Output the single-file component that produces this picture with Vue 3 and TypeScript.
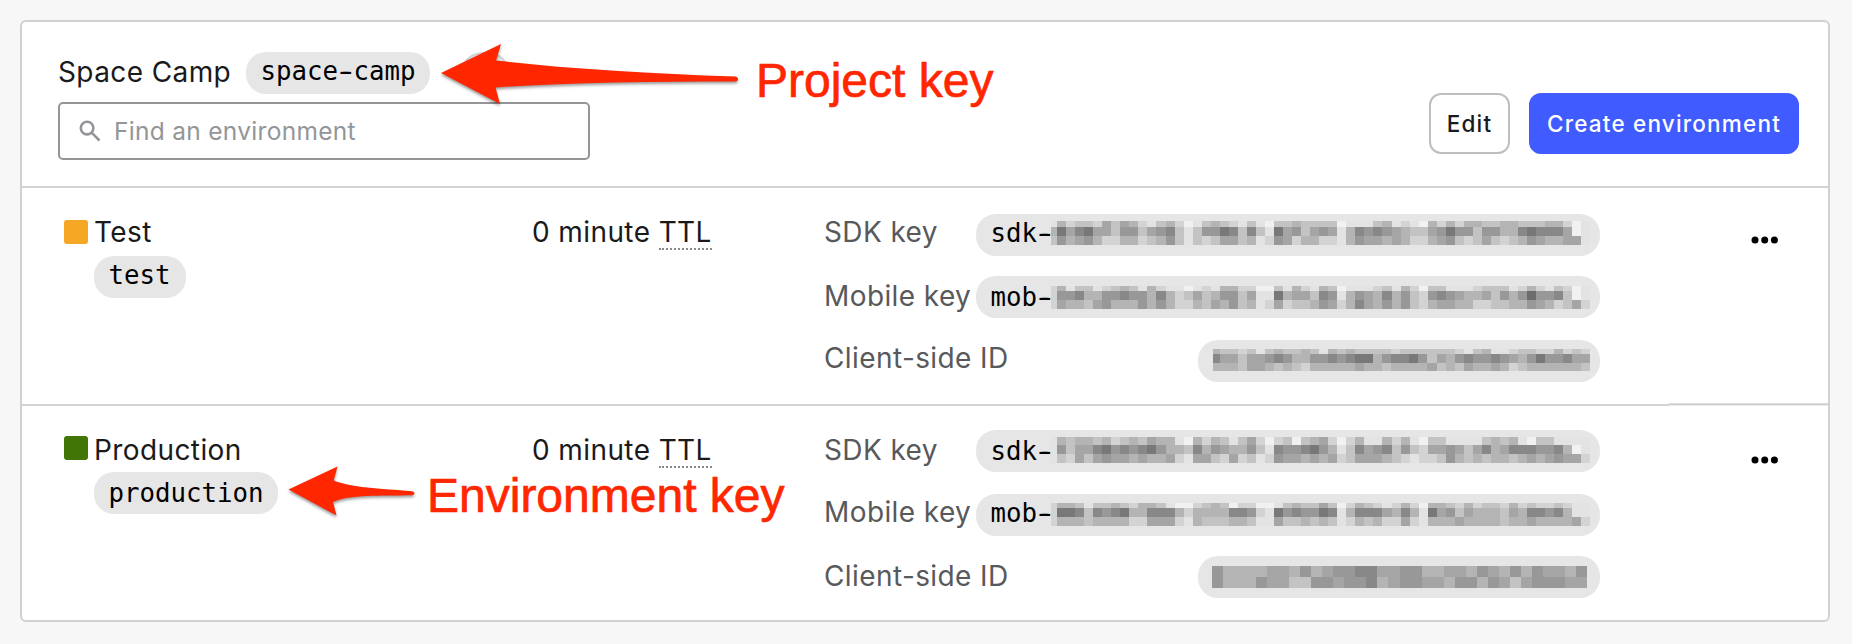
<script setup lang="ts">
interface Mosaic {
  x: number
  y: number
  pitch: number
  offset: number
  heights: number[]
  rows: string[]
}

interface KeyLine {
  label: string
  prefix: string
  raised: boolean
  mosaic: Mosaic
}

interface Environment {
  name: string
  key: string
  ttl: number
  keys: KeyLine[]
}

const environments: Environment[] = [
  {
    name: 'Test',
    key: 'test',
    ttl: 0,
    keys: [
      {
        label: 'SDK key',
        prefix: 'sdk-',
        raised: true,
        mosaic: {
          x: 75, y: 7, pitch: 9.04, offset: 3, heights: [6, 9, 9],
          rows: [
            'ebdccdacabdecbdfecbcdecefccbccccfeeecbedefbdbdbbccbbcccbbdfe',
            'b7a87aac99ca98cec9978c8ce7a9ca9aeb8989abcca9799c99bb87888afe',
            'c9ba9bddbbdcb9cecdcaacbed9adbbddeb9aababddba9cdcacdcb9abbaae',
          ],
        },
      },
      {
        label: 'Mobile key',
        prefix: 'mob-',
        raised: false,
        mosaic: {
          x: 75, y: 10, pitch: 9.04, offset: 3, heights: [4.5, 9, 9],
          rows: [
            'dbeccedcbcebdeefedebbddffcebdebcfeeedcebdfcceeedcccedbdecdfe',
            'd998bb99899b8bdcacb99caee7baac89eb9ab8b9cd989abbac9b96998cfe',
            'dabbca9bbb9b9bddbcab9cbedadccb9adb8ab9b9cdbaabbddccbb9abdcad',
          ],
        },
      },
      {
        label: 'Client-side ID',
        prefix: '',
        raised: true,
        mosaic: {
          x: 15, y: 9, pitch: 9.04, offset: 2.5, heights: [4.5, 9, 8.5],
          rows: [
            'bccdcecbccbcebcbccccdccccccdecbeedccddbdcd',
            '8aacaa989bb9989877b98879cab989989ab97998aa',
            'bbbcaabcbcdbbbbbabbcbbbbacbcabbabdcbbbbbbc',
          ],
        },
      },
    ],
  },
  {
    name: 'Production',
    key: 'production',
    ttl: 0,
    keys: [
      {
        label: 'SDK key',
        prefix: 'sdk-',
        raised: false,
        mosaic: {
          x: 75, y: 7, pitch: 9.04, offset: 3, heights: [7.5, 9, 9],
          rows: [
            'ebcbbcbdcbcabbefbdbcecadfdcfcbadfdbeebdbefcceeeecbcbefcceeee',
            'e9caa87989879bbc8b9abb9ce899879bec8a98c9cdaa9aca8ba888998bfe',
            'ecdaca9aababbadeaacdadced9aababadcaaabcdeddc9bcbcbbcbaba9aad',
          ],
        },
      },
      {
        label: 'Mobile key',
        prefix: 'mob-',
        raised: true,
        mosaic: {
          x: 75, y: 9, pitch: 9.04, offset: 3, heights: [5, 9, 9],
          rows: [
            'dbbceccbcdbbceffdcbcfddffecbccacfdbcdedbdfbbcdbdccdbdcddcdee',
            'd778c8987bb888bdbbbb889de7989978eb888ab8be7a9cabbbcab8898bee',
            'dbbbcbbbbddaaadebcccbbceeaccbcbcedbcbddadebbbabbbbcbbabbbbad',
          ],
        },
      },
      {
        label: 'Client-side ID',
        prefix: '',
        raised: false,
        mosaic: {
          x: 14, y: 10, pitch: 11.03, offset: 0, heights: [11, 11],
          rows: [
            '9bbbbaab9ba9988aa99bbaab9ab9b9aab9',
            '9bbb9aacc99a998ba99aab99b9aca999aa',
          ],
        },
      },
    ],
  },
]

interface Block {
  x: number
  y: number
  w: number
  h: number
  fill: string
}

const shades: Record<string, string> = {
  '6': '#6c6c6c',
  '7': '#787878',
  '8': '#888888',
  '9': '#989898',
  a: '#a5a5a5',
  b: '#b4b4b4',
  c: '#c3c3c3',
  d: '#d3d3d3',
  e: '#e3e3e3',
  f: '#f1f1f1',
}

function blocks(m: Mosaic): Block[] {
  const out: Block[] = []
  let y = 0
  m.rows.forEach((row, r) => {
    const h = m.heights[r]
    Array.from(row).forEach((c, i) => {
      const x = Math.max(0, i * m.pitch - m.offset)
      const end = (i + 1) * m.pitch - m.offset
      out.push({ x, y, w: end - x, h, fill: shades[c] })
    })
    y += h
  })
  return out
}
</script>

<template>
  <main class="page">
    <section class="card">
      <header class="head">
        <div class="project">
          <div class="title">
            <span class="title-name">Space Camp</span>
            <code class="pill pill-raised">space<span class="dash">-</span>camp</code>
            <svg class="ghost" viewBox="0 0 48 14">
              <path d="M3 12.5C7 4 14 1 24 1S41 4 45.5 11.5" />
            </svg>
          </div>
          <label class="search">
            <svg class="search-icon" viewBox="0 0 22 22">
              <circle cx="8.1" cy="8.1" r="6.3" />
              <path d="M12.6 12.6 20.5 20.5" />
            </svg>
            <span>Find an environment</span>
          </label>
        </div>
        <div class="actions">
          <button class="btn">Edit</button>
          <button class="btn btn-primary">Create environment</button>
        </div>
      </header>

      <article v-for="env in environments" :key="env.key" class="env" :class="`env-${env.key}`">
        <div class="identity">
          <span class="swatch"></span>
          <div class="names">
            <span class="env-name">{{ env.name }}</span>
            <code class="pill" :class="{ 'pill-raised': env.key === 'test' }">{{ env.key }}</code>
          </div>
        </div>
        <div class="ttl">{{ env.ttl }} minute <abbr>TTL</abbr></div>
        <div class="keys">
          <div v-for="k in env.keys" :key="k.label" class="key-line" :class="{ raised: k.raised }">
            <span class="key-label">{{ k.label }}</span>
            <code class="pill key-pill" :class="[{ 'pill-raised': k.raised }, k.prefix ? 'long' : 'short']">
              <template v-if="k.prefix">{{ k.prefix.slice(0, 3) }}<span class="dash">-</span></template>
              <svg class="mosaic" width="624" height="42" shape-rendering="crispEdges">
                <g :transform="`translate(${k.mosaic.x} ${k.mosaic.y})`">
                  <rect
                    v-for="(b, i) in blocks(k.mosaic)"
                    :key="i"
                    :x="b.x"
                    :y="b.y"
                    :width="b.w"
                    :height="b.h"
                    :fill="b.fill"
                  />
                </g>
              </svg>
            </code>
          </div>
        </div>
        <svg class="more" viewBox="0 0 28 8">
          <circle cx="4" cy="4" r="3.5" />
          <circle cx="13.7" cy="4" r="3.5" />
          <circle cx="23.4" cy="4" r="3.5" />
        </svg>
      </article>
      <span class="divider-step"></span>
    </section>

    <svg class="notes" viewBox="0 0 1852 644">
      <path d="M441 73 501 44 496 60.5C570 69 650 73.5 735 76.5Q738 77 738 79T735 81.5C650 81.5 570 82.5 495.5 87.5L500 104Z" />
      <path d="M288.5 489.5 337.5 466.5 333.7 480.5C350 487.5 380 488.5 412 491.3Q414.5 491.7 414.5 493.3T412 495.3C380 496 350 494.5 333 502L336.5 515.5Z" />
    </svg>
    <span class="note note-project">Project key</span>
    <span class="note note-env">Environment key</span>
  </main>
</template>

<style>
body {
  background: #f7f7f7;
}
</style>

<style scoped>
.page {
  position: relative;
  box-sizing: border-box;
  width: 1852px;
  height: 644px;
  padding: 20px 22px 22px 20px;
  overflow: hidden;
  background: #f7f7f7;
  font-family: Inter, "Liberation Sans", sans-serif;
  font-size: 28px;
  letter-spacing: 0.4px;
  color: #1a1a1b;
}
.card {
  position: relative;
  box-sizing: border-box;
  height: 602px;
  border: 2px solid #d1d1d1;
  border-radius: 6px;
  background: #fff;
}
.head {
  display: flex;
  justify-content: space-between;
  box-sizing: border-box;
  height: 166px;
  padding: 30px 29px 0 36px;
  border-bottom: 2px solid #d1d3d4;
}
.title {
  display: flex;
  height: 42px;
}
.title-name {
  width: 188px;
  line-height: 40px;
  white-space: nowrap;
}
.pill {
  box-sizing: border-box;
  display: block;
  width: max-content;
  min-width: 92px;
  height: 42px;
  padding: 0 14.4px;
  border-radius: 20px;
  background: #e6e6e6;
  color: #000;
  font: 25.75px/42px "DejaVu Sans Mono", monospace;
  letter-spacing: 0;
  white-space: nowrap;
}
.pill-raised {
  line-height: 39px;
}
.dash {
  text-shadow: -2px 0 currentColor, 2px 0 currentColor;
}
.ghost {
  flex: none;
  width: 48px;
  height: 14px;
  margin-left: 31px;
  fill: #e4e5e6;
  stroke: #cfd1d3;
  stroke-width: 2;
}
.search {
  display: flex;
  align-items: center;
  gap: 13px;
  box-sizing: border-box;
  width: 532px;
  height: 58px;
  margin-top: 8px;
  padding-left: 19px;
  border: 2px solid #939598;
  border-radius: 5px;
  color: #939598;
  font-size: 24.5px;
  letter-spacing: 0.3px;
}
.search-icon {
  width: 22px;
  height: 22px;
  fill: none;
  stroke: #939598;
  stroke-width: 2.6;
}
.actions {
  display: flex;
  gap: 19px;
  margin-top: 41px;
}
.btn {
  box-sizing: border-box;
  width: 81px;
  height: 61px;
  padding: 0;
  border: 2px solid #bcbec0;
  border-radius: 12px;
  background: #fff;
  color: #1a1a1b;
  font: 500 22.5px/57px Inter, sans-serif;
  letter-spacing: 1.2px;
  white-space: nowrap;
}
.btn-primary {
  width: 270px;
  border-color: #405bff;
  background: #405bff;
  color: #fff;
}
.env {
  display: flex;
  box-sizing: border-box;
  height: 218px;
  border-bottom: 2px solid #d1d3d4;
}
.env-production {
  height: 214px;
  border-bottom: 0;
}
.identity {
  display: flex;
  gap: 6px;
  width: 468px;
  padding-left: 42px;
}
.swatch {
  width: 24px;
  height: 24px;
  margin-top: 32px;
  border-radius: 3px;
  background: #f5a623;
}
.env-production .swatch {
  margin-top: 30px;
  background: #417505;
}
.env-name {
  display: block;
  height: 38px;
  padding-top: 30px;
  line-height: 28px;
}
.env-production .env-name {
  height: 36px;
}
.ttl {
  width: 292px;
  padding-top: 26px;
  line-height: 36px;
}
abbr {
  display: inline-block;
  height: 34px;
  border-bottom: 2px dotted #8a8a8a;
  text-decoration: none;
}
.keys {
  display: grid;
  grid-template-rows: 42px 42px 42px;
  row-gap: 20px;
  width: 776px;
  padding-top: 26px;
}
.env-test .key-line:last-child {
  margin-top: 2px;
}
.env-production .keys {
  padding-top: 24px;
}
.env-production .key-line:nth-child(n + 2) {
  margin-top: 2px;
  margin-bottom: -2px;
}
.key-line {
  display: flex;
  justify-content: space-between;
  height: 42px;
}
.key-label {
  color: #58595b;
  line-height: 40px;
  white-space: nowrap;
}
.raised .key-label {
  line-height: 36px;
}
.key-pill {
  position: relative;
  overflow: hidden;
}
.long {
  width: 624px;
}
.short {
  width: 402px;
}
.mosaic {
  position: absolute;
  inset: 0 auto auto 0;
}
.more {
  width: 28px;
  height: 8px;
  margin: 48px 0 0 151px;
}
.env-production .more {
  margin-top: 50px;
}
.divider-step {
  position: absolute;
  top: 381px;
  right: 0;
  width: 159px;
  height: 3px;
  background: linear-gradient(#dcdcdc 0 1px, #cbcdce 1px 2px, #ececec 2px);
}
.notes {
  position: absolute;
  inset: 0;
  width: 1852px;
  height: 644px;
  fill: #ff2600;
  filter: drop-shadow(0 2px 1.5px rgba(0, 0, 0, 0.4));
}
.note {
  position: absolute;
  color: #ff2600;
  font: 48px/56px "Liberation Sans", Arial, sans-serif;
  letter-spacing: 0;
  -webkit-text-stroke: 0.7px #ff2600;
  white-space: nowrap;
}
.note-project {
  left: 756px;
  top: 53px;
}
.note-env {
  left: 427px;
  top: 468px;
}
</style>
